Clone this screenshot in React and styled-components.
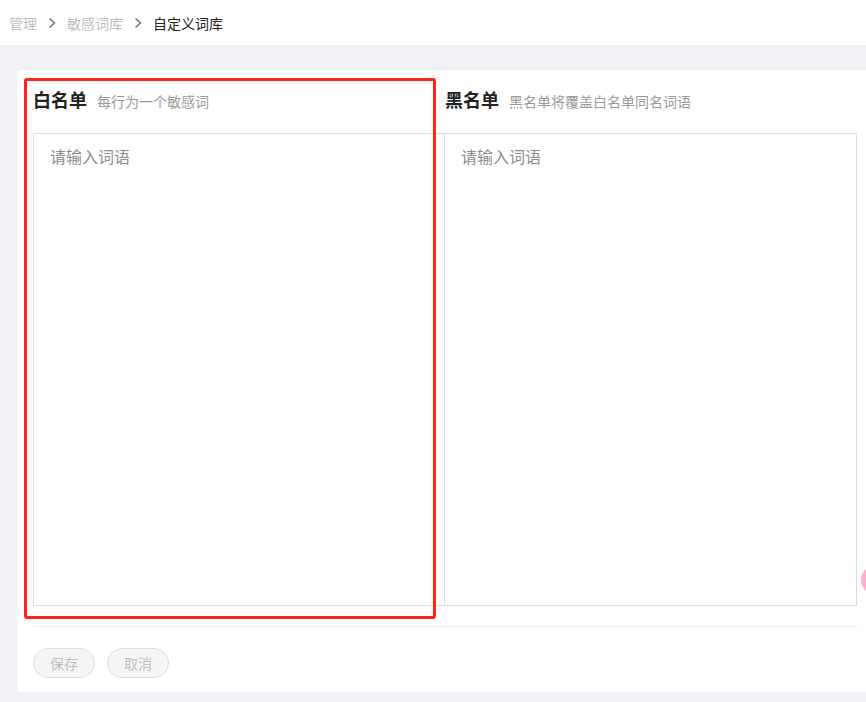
import React from 'react'
import styled, { createGlobalStyle } from 'styled-components'

const GlobalStyle = createGlobalStyle`
  html, body {
    margin: 0;
    padding: 0;
    overflow: hidden;
    background: #f0f1f5;
    font-family: "Noto Sans CJK SC", "Noto Sans", sans-serif;
  }
  * { box-sizing: border-box; }
`

const Page = styled.div`
  position: relative;
  width: 866px;
  height: 702px;
  overflow: hidden;
  background: #f0f1f5;
`

const Crumbs = styled.nav`
  display: flex;
  align-items: center;
  height: 45px;
  padding: 0 9px;
  background: #fff;
  font-size: 14px;
  line-height: 20px;
  gap: 10px;
`

const Crumb = styled.span`
  color: ${({ current }) => (current ? '#222' : '#bdbdbd')};
`

const Chevron = () => (
  <svg width="10" height="12" viewBox="0 0 10 12" fill="none">
    <path d="M2.5 1.5 L7.5 6 L2.5 10.5" stroke="#666" strokeWidth="1.3" />
  </svg>
)

const Main = styled.main`
  padding: 25px 0 0 17px;
`

const Card = styled.section`
  width: 856px;
  padding: 18px 16px 14px;
  background: #fff;
  border-radius: 4px 0 0 4px;
`

const Columns = styled.div`
  display: grid;
  grid-template-columns: 412px 412px;
`

const Column = styled.div`
  display: flex;
  flex-direction: column;
`

const Header = styled.div`
  display: flex;
  align-items: baseline;
  gap: 10px;
  height: 22px;
  margin-bottom: 23px;
`

const Title = styled.h3`
  margin: 0;
  font-size: 18px;
  line-height: 22px;
  font-weight: 700;
  color: #222;
`

const Hint = styled.span`
  font-size: 14px;
  color: #999;
`

const Words = styled.textarea`
  width: 100%;
  height: 473px;
  padding: 10px 16px;
  border: 1px solid #dcdcdc;
  border-left-width: ${({ joined }) => (joined ? '0' : '1px')};
  border-radius: 0;
  resize: none;
  outline: none;
  font-family: inherit;
  font-size: 16px;
  line-height: 24px;
  color: #333;

  &::placeholder {
    color: #8c8c8c;
  }
`

const Divider = styled.hr`
  margin: 20px 0 21px;
  border: 0;
  border-top: 1px solid #ececec;
`

const Actions = styled.div`
  display: flex;
  gap: 12px;
`

const Button = styled.button`
  width: 62px;
  height: 30px;
  border: 1px solid #dcdcdc;
  border-radius: 15px;
  background: #f5f5f5;
  color: #bdbdbd;
  font-family: inherit;
  font-size: 14px;
  cursor: not-allowed;
`

const Highlight = styled.div`
  position: absolute;
  left: 24px;
  top: 78px;
  width: 412px;
  height: 541px;
  border: 3px solid #ff2318;
  border-radius: 3px;
  pointer-events: none;
`

const Bubble = styled.div`
  position: absolute;
  left: 861px;
  top: 566px;
  width: 28px;
  height: 28px;
  border-radius: 50%;
  background: #fbb0d0;
`

const lists = [
  { id: 'white', title: '白名单', hint: '每行为一个敏感词' },
  { id: 'black', title: '黑名单', hint: '黑名单将覆盖白名单同名词语' }
]

export default function App() {
  return (
    <Page>
      <GlobalStyle />
      <Crumbs>
        <Crumb>管理</Crumb>
        <Chevron />
        <Crumb>敏感词库</Crumb>
        <Chevron />
        <Crumb current>自定义词库</Crumb>
      </Crumbs>
      <Main>
        <Card>
          <Columns>
            {lists.map((list, i) => (
              <Column key={list.id}>
                <Header>
                  <Title>{list.title}</Title>
                  <Hint>{list.hint}</Hint>
                </Header>
                <Words joined={i > 0} placeholder="请输入词语" />
              </Column>
            ))}
          </Columns>
          <Divider />
          <Actions>
            <Button disabled>保存</Button>
            <Button disabled>取消</Button>
          </Actions>
        </Card>
      </Main>
      <Highlight />
      <Bubble />
    </Page>
  )
}
